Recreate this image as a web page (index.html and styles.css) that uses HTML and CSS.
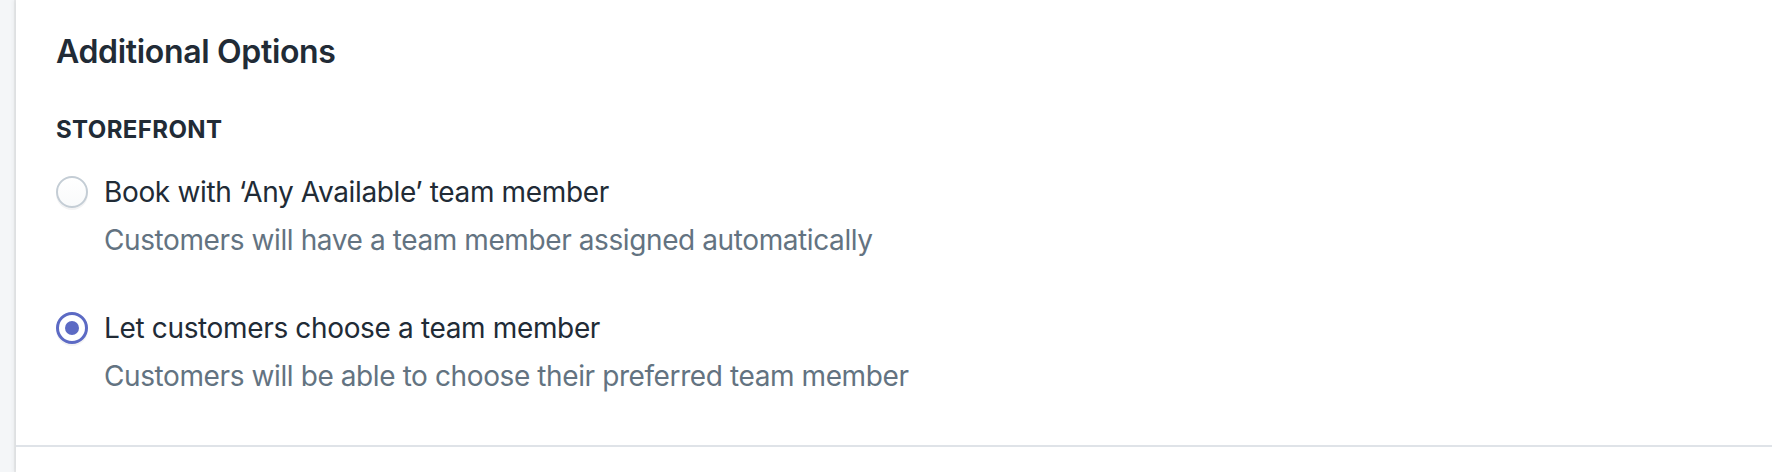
FILE: index.html
```html
<!DOCTYPE html>
<html lang="en">
<head>
    <meta charset="UTF-8">
    <meta name="viewport" content="width=device-width, initial-scale=1.0">
    <title>Additional Options</title>
    <link rel="stylesheet" href="styles.css">
</head>
<body>
    <div class="card">
        <div class="card-section">
            <h2 class="card-title">Additional Options</h2>
            <h3 class="subheading">Storefront</h3>
            <ul class="choices">
                <li class="choice">
                    <label class="choice-label">
                        <span class="radio"></span>
                        <span>Book with ‘Any Available’ team member</span>
                    </label>
                    <div class="help">Customers will have a team member assigned automatically</div>
                </li>
                <li class="choice">
                    <label class="choice-label">
                        <span class="radio checked"></span>
                        <span>Let customers choose a team member</span>
                    </label>
                    <div class="help">Customers will be able to choose their preferred team member</div>
                </li>
            </ul>
        </div>
        <div class="card-section next"></div>
    </div>
</body>
</html>
```

FILE: styles.css
```css
*{
    padding:0;
    margin:0;
    box-sizing:border-box;
}
body{
    background:#f4f6f8;
    font-family:Inter, "Noto Sans", sans-serif;
    color:#212b36;
    height:472px;
    overflow:hidden;
}
.card{
    margin-left:16px;
    height:100%;
    background:#fff;
    box-shadow:-1px 0 0 1px rgba(63,63,68,0.06), -2px 0 4px 0 rgba(63,63,68,0.08);
}
.card-section{
    padding:28px 40px 49px 40px;
}
.card-section.next{
    border-top:2px solid #dfe3e8;
    padding:0;
    height:40px;
}
.card-title{
    font-size:32px;
    line-height:48px;
    font-weight:600;
    letter-spacing:-0.33px;
}
.subheading{
    margin-top:38px;
    font-size:24px;
    line-height:32px;
    font-weight:700;
    letter-spacing:0.4px;
    text-transform:uppercase;
}
.choices{
    list-style:none;
    margin-top:26px;
}
.choice + .choice{
    margin-top:48px;
}
.choice-label{
    display:flex;
    align-items:center;
    gap:16px;
    font-size:28px;
    line-height:40px;
    letter-spacing:-0.35px;
}
.radio{
    flex:none;
    width:32px;
    height:32px;
    border-radius:50%;
    border:2px solid #c4cdd5;
    background:linear-gradient(to bottom, #fff, #f9fafb);
    box-shadow:0 2px 0 0 rgba(22,29,37,0.05);
}
.radio.checked{
    border:3px solid #5c6ac4;
    background:#fff;
    display:flex;
    align-items:center;
    justify-content:center;
}
.radio.checked::after{
    content:"";
    width:14px;
    height:14px;
    border-radius:50%;
    background:#5c6ac4;
}
.help{
    margin-top:8px;
    padding-left:48px;
    font-size:28px;
    line-height:40px;
    letter-spacing:-0.4px;
    color:#637381;
}
```
